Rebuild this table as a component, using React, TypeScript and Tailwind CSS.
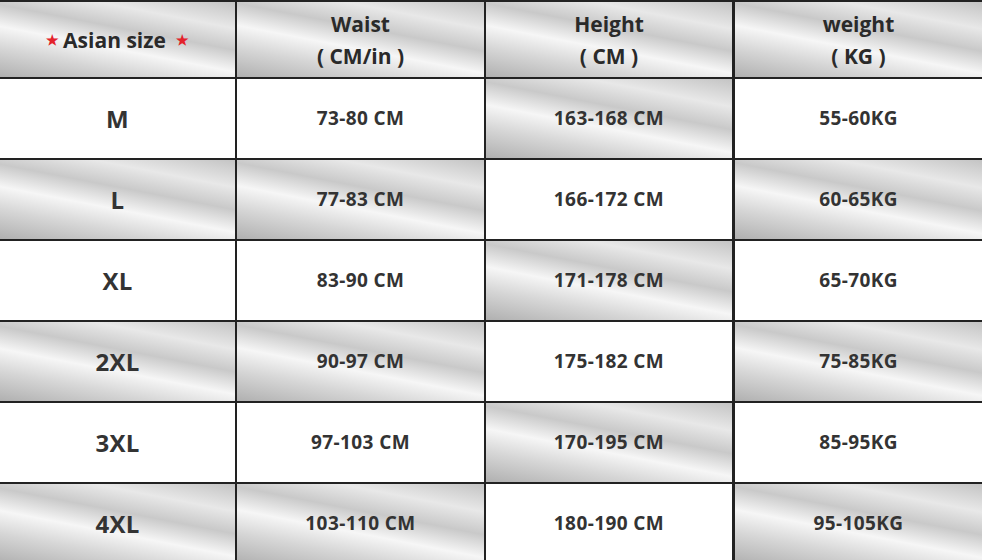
const rows = [
  ["M", "73-80 CM", "163-168 CM", "55-60KG"],
  ["L", "77-83 CM", "166-172 CM", "60-65KG"],
  ["XL", "83-90 CM", "171-178 CM", "65-70KG"],
  ["2XL", "90-97 CM", "175-182 CM", "75-85KG"],
  ["3XL", "97-103 CM", "170-195 CM", "85-95KG"],
  ["4XL", "103-110 CM", "180-190 CM", "95-105KG"],
];

const metal =
  "bg-[linear-gradient(191deg,#c4c4c4_0%,#e8e8e8_22%,#c9c9c9_40%,#f6f6f6_58%,#d6d6d6_76%,#b0b0b0_100%)]";

const colBorder = [
  "w-[237px] border-r-2",
  "w-[249px] border-r-2",
  "w-[249px] border-r-[3px]",
  "flex-1",
];

function Cell({
  col,
  shaded,
  children,
  className = "",
}: {
  col: number;
  shaded: boolean;
  children: React.ReactNode;
  className?: string;
}) {
  return (
    <div
      className={`${colBorder[col]} border-[#222] flex flex-col items-center justify-center text-center ${
        shaded ? metal : "bg-white"
      } ${className}`}
    >
      {children}
    </div>
  );
}

export default function App() {
  return (
    <div
      className="w-[982px] h-[560px] overflow-hidden bg-white text-[#333] font-bold"
      style={{ fontFamily: '"Open Sans", "Liberation Sans", sans-serif' }}
    >
      <div className="border-t-2 border-[#222]">
        {/* header */}
        <div className="flex h-[77px] border-b-2 border-[#222] text-[21px] leading-[32px] text-[#2a2a2a]">
          <Cell col={0} shaded>
            <div className="flex items-center">
              <span className="text-[#e3222b] text-[14px] mr-1">★</span>
              <span>Asian size</span>
              <span className="text-[#e3222b] text-[14px] ml-2.5">★</span>
            </div>
          </Cell>
          <Cell col={1} shaded>
            <div>Waist</div>
            <div>( CM/in )</div>
          </Cell>
          <Cell col={2} shaded>
            <div>Height</div>
            <div>( CM )</div>
          </Cell>
          <Cell col={3} shaded>
            <div>weight</div>
            <div>( KG )</div>
          </Cell>
        </div>

        {rows.map((r, i) => {
          const odd = i % 2 === 1;
          return (
            <div key={r[0]} className="flex h-[81px] border-b-2 border-[#222]">
              <Cell col={0} shaded={odd} className="text-[24px] tracking-[0.3px]">
                {r[0]}
              </Cell>
              <Cell col={1} shaded={odd} className="text-[19px] tracking-[0.4px]">
                {r[1]}
              </Cell>
              <Cell col={2} shaded={!odd} className="text-[19px] tracking-[0.4px]">
                {r[2]}
              </Cell>
              <Cell col={3} shaded={odd} className="text-[19px] tracking-[0.4px]">
                {r[3]}
              </Cell>
            </div>
          );
        })}
      </div>
    </div>
  );
}
